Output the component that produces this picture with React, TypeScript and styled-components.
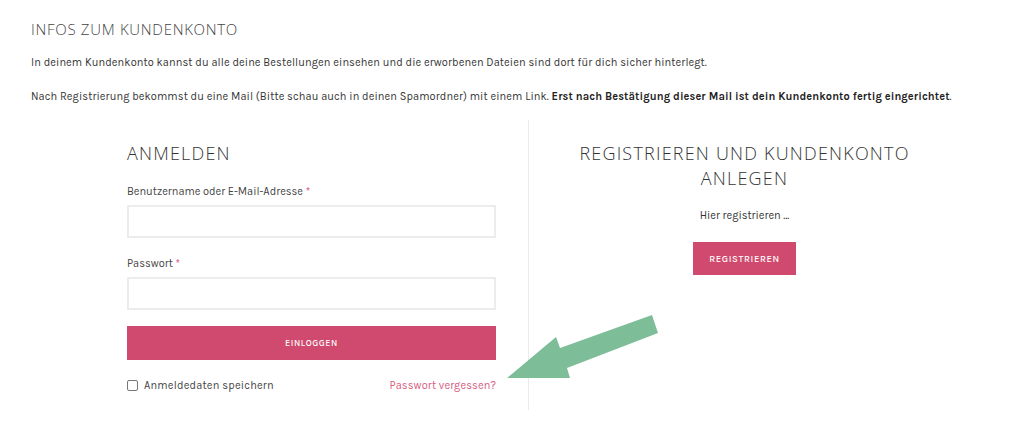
import React from 'react'
import styled, { createGlobalStyle } from 'styled-components'

const GlobalStyle = createGlobalStyle`
  body {
    margin: 0;
    background: #fff;
    font-family: 'Karla', 'Roboto', 'Liberation Sans', sans-serif;
    color: #333;
  }
`

const Page = styled.main`
  position: relative;
  width: 1024px;
  height: 432px;
  padding: 19px 31px 0;
  box-sizing: border-box;
  overflow: hidden;
`

const Title = styled.h2`
  margin: 0;
  font-family: 'Open Sans', sans-serif;
  font-weight: 300;
  font-size: 15px;
  line-height: 20px;
  color: #444;
  letter-spacing: 0.7px;
`

const Text = styled.p`
  margin: 16px 0 0;
  font-size: 11px;
  line-height: 16px;
  color: #333;
  letter-spacing: 0.1px;

  & + & {
    margin-top: 18px;
  }

  strong {
    font-weight: 700;
    color: #222;
  }
`

const Columns = styled.div`
  display: grid;
  grid-template-columns: 432px 432px;
  margin: 15px 0 0 65px;
`

const Column = styled.section<{ $divider?: boolean }>`
  padding: ${p => (p.$divider ? '21px 32px 0' : '21px 32px 0 31px')};
  border-left: ${p => (p.$divider ? '1px solid #ececec' : 'none')};
  height: 290px;
  box-sizing: border-box;
  text-align: ${p => (p.$divider ? 'center' : 'left')};
`

const Heading = styled.h3`
  margin: 0;
  font-family: 'Open Sans', sans-serif;
  font-weight: 300;
  font-size: 18px;
  line-height: 25px;
  color: #333;
  letter-spacing: 1.2px;
`

const Label = styled.label`
  display: block;
  margin-top: 18px;
  font-size: 11px;
  line-height: 15px;
  color: #444;

  span {
    color: #d04a6e;
  }
`

const Input = styled.input`
  display: block;
  width: 100%;
  height: 33px;
  margin-top: 6px;
  box-sizing: border-box;
  border: 2px solid #ececec;
  background: #fff;
  outline: none;
`

const Button = styled.button<{ $full?: boolean }>`
  display: block;
  width: ${p => (p.$full ? '100%' : '103px')};
  height: ${p => (p.$full ? '34px' : '33px')};
  margin: ${p => (p.$full ? '16px 0 0' : '19px auto 0')};
  border: none;
  background: #cf4a6e;
  color: #fff;
  font-family: 'Karla', 'Roboto', 'Liberation Sans', sans-serif;
  font-size: ${p => (p.$full ? '9px' : '9.5px')};
  font-weight: 500;
  letter-spacing: 0.6px;
  text-transform: uppercase;
`

const Row = styled.div`
  display: flex;
  justify-content: space-between;
  align-items: center;
  margin-top: 19px;
  font-size: 11px;
  color: #444;
`

const Remember = styled.label`
  display: flex;
  align-items: center;
  gap: 6px;
  letter-spacing: 0.2px;
`

const Box = styled.span`
  width: 9px;
  height: 9px;
  border: 1px solid #777;
  border-radius: 2px;
`

const Forgot = styled.a`
  color: #d75b80;
  text-decoration: none;
  letter-spacing: 0.1px;
`

const Hint = styled.p`
  margin: 17px 0 0;
  font-size: 11px;
  line-height: 15px;
  color: #333;
`

const Arrow = styled.svg`
  position: absolute;
  left: 0;
  top: 0;
  pointer-events: none;
`

function App() {
  return (
    <>
      <GlobalStyle />
      <Page>
        <Title>INFOS ZUM KUNDENKONTO</Title>
        <Text>
          In deinem Kundenkonto kannst du alle deine Bestellungen einsehen und die erworbenen Dateien sind dort für dich sicher hinterlegt.
        </Text>
        <Text>
          Nach Registrierung bekommst du eine Mail (Bitte schau auch in deinen Spamordner) mit einem Link.{' '}
          <strong>Erst nach Bestätigung dieser Mail ist dein Kundenkonto fertig eingerichtet</strong>.
        </Text>
        <Columns>
          <Column>
            <Heading>ANMELDEN</Heading>
            <Label>
              Benutzername oder E-Mail-Adresse <span>*</span>
            </Label>
            <Input type="text" />
            <Label>
              Passwort <span>*</span>
            </Label>
            <Input type="password" />
            <Button type="button" $full>Einloggen</Button>
            <Row>
              <Remember>
                <Box />
                Anmeldedaten speichern
              </Remember>
              <Forgot href="#">Passwort vergessen?</Forgot>
            </Row>
          </Column>
          <Column $divider>
            <Heading>
              REGISTRIEREN UND KUNDENKONTO
              <br />
              ANLEGEN
            </Heading>
            <Hint>Hier registrieren …</Hint>
            <Button type="button">Registrieren</Button>
          </Column>
        </Columns>
        <Arrow width="1024" height="432" viewBox="0 0 1024 432">
          <polygon
            points="507,378 556,337 560,348 652,315 658,333 567,368 570,378"
            fill="#7dbe98"
          />
        </Arrow>
      </Page>
    </>
  )
}

export default App
